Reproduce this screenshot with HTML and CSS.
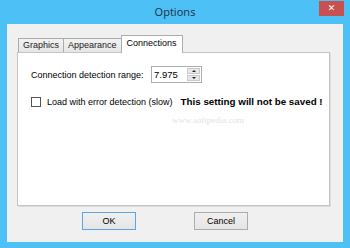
FILE: index.html
```html
<!DOCTYPE html>
<html>
<head>
  <meta charset="UTF-8">
  <title>Options</title>
  <link rel="stylesheet" href="styles.css">
</head>
<body>
  <div class="window">
    <div class="titlebar">
      <span></span>
      <span class="title">Options</span>
      <button class="close">&#x2715;</button>
    </div>

    <div class="client">
      <div class="tabs">
        <div class="tab">Graphics</div>
        <div class="tab">Appearance</div>
        <div class="tab active">Connections</div>
      </div>

      <div class="panel">
        <div class="row range">
          <label class="label">Connection detection range:</label>
          <div class="spin">
            <span class="value">7.975</span>
            <div class="arrows">
              <span class="arrow up"></span>
              <span class="arrow down"></span>
            </div>
          </div>
        </div>

        <div class="row check">
          <span class="box"></span>
          <span>Load with error detection (slow)</span>
          <strong class="warn">This setting will not be saved !</strong>
        </div>

        <div class="watermark">www.softpedia.com</div>
      </div>

      <div class="buttons">
        <button class="btn btn-default">OK</button>
        <button class="btn">Cancel</button>
      </div>
    </div>
  </div>
</body>
</html>
```

FILE: styles.css
```css
body {
  margin: 0;
  font-family: "Liberation Sans", Arial, sans-serif;
  font-size: 9px;
  color: #000;
}
.window {
  width: 350px;
  height: 248px;
  box-sizing: border-box;
  background: #4dc1f5;
  padding: 0 7px 6px 7px;
}
.titlebar {
  height: 24px;
  display: grid;
  grid-template-columns: 1fr auto 1fr;
  align-items: start;
  margin: 0 -7px;
}
.title {
  font-family: "Noto Sans", "Open Sans", sans-serif;
  font-size: 11px;
  color: #1c3954;
  line-height: 24px;
}
.close {
  justify-self: end;
  margin-right: 6px;
  margin-top: 1px;
  width: 25px;
  height: 15px;
  border: none;
  padding: 0;
  background: #c75050;
  color: #fff;
  font-family: "DejaVu Sans", sans-serif;
  font-size: 9px;
  font-weight: bold;
  line-height: 15px;
}
.client {
  height: 218px;
  background: #f0f0f0;
  padding: 11px 0 0 10px;
  box-sizing: border-box;
}
.tabs {
  display: flex;
  align-items: flex-end;
  height: 17px;
  padding-left: 1px;
}
.tab {
  height: 14px;
  box-sizing: border-box;
  border: 1px solid #acacac;
  border-bottom: none;
  background: linear-gradient(#f2f2f2, #e6e6e6);
  padding: 0 4px;
  line-height: 13px;
  margin-right: -1px;
  color: #222;
}
.tab.active {
  height: 18px;
  background: #fff;
  padding: 0 5px;
  margin-bottom: -1px;
  line-height: 15px;
  color: #000;
}
.panel {
  width: 313px;
  height: 154px;
  box-sizing: border-box;
  background: #fff;
  border: 1px solid #c4c4c4;
  box-shadow: 1px 1px 0 #dcdcdc;
  padding: 13px 0 0 13px;
}
.row {
  display: flex;
  align-items: center;
}
.label {
  width: 120px;
}
.spin {
  width: 51px;
  height: 17px;
  box-sizing: border-box;
  border: 1px solid #abadb3;
  display: flex;
  align-items: center;
  justify-content: space-between;
  padding: 1px 1px 1px 2px;
}
.value {
  font-size: 9.5px;
}
.arrows {
  width: 13px;
  height: 13px;
  display: flex;
  flex-direction: column;
  gap: 1px;
}
.arrow {
  flex: 1;
  background: #e8e8e8;
  border: 1px solid #c9c9c9;
  display: flex;
  align-items: center;
  justify-content: center;
}
.arrow::after {
  content: "";
  border-left: 2px solid transparent;
  border-right: 2px solid transparent;
}
.up::after {
  border-bottom: 2px solid #222;
}
.down::after {
  border-top: 2px solid #222;
}
.check {
  margin-top: 13px;
}
.box {
  width: 10px;
  height: 10px;
  box-sizing: border-box;
  border: 1px solid #555;
  background: #fff;
  margin-right: 6px;
}
.warn {
  font-size: 9.8px;
  margin-left: 8px;
}
.watermark {
  margin: 8px 0 0 141px;
  color: #e3e3e3;
  font-family: "Liberation Serif", serif;
  font-size: 9px;
}
.buttons {
  display: flex;
  gap: 58px;
  margin: 6px 0 0 65px;
}
.btn {
  width: 54px;
  height: 18px;
  border: 1px solid #acacac;
  background: linear-gradient(#f0f0f0, #e5e5e5);
  font-family: "Liberation Sans", Arial, sans-serif;
  font-size: 9px;
  padding: 0;
}
.btn-default {
  border-color: #5fa3e0;
}
```
